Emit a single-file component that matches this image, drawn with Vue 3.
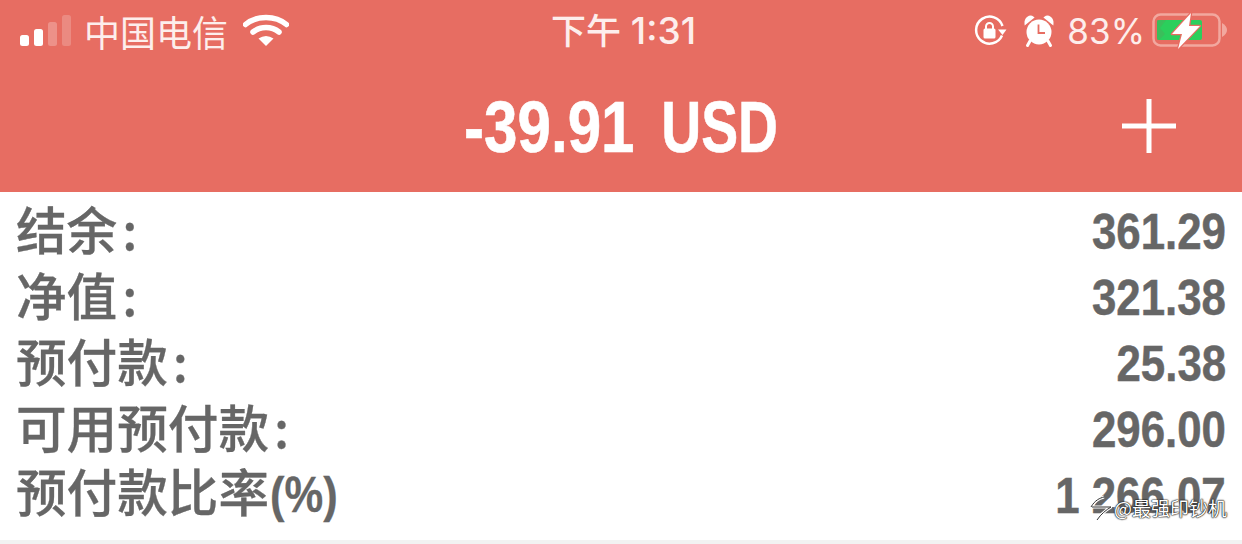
<template>
  <div class="screen">
    <header class="top">
      <div class="status">
        <div class="status-left">
          <svg class="signal" width="53" height="34" viewBox="0 0 53 34">
            <rect x="1" y="21" width="9" height="11" rx="2.5" fill="#fff" />
            <rect x="15" y="15" width="9" height="17" rx="2.5" fill="#fff" />
            <rect x="29" y="8" width="9" height="24" rx="2.5" fill="#fff" opacity="0.25" />
            <rect x="43" y="1" width="9" height="31" rx="2.5" fill="#fff" opacity="0.2" />
          </svg>
          <span class="carrier">中国电信</span>
          <svg class="wifi" width="46" height="34" viewBox="0 0 46 34">
            <path d="M2.500 10.500C13.500 1 32.500 1 43.500 10.500" fill="none" stroke="#fff" stroke-width="5.500" stroke-linecap="round" />
            <path d="M10 18C17.500 12 28.500 12 36 18" fill="none" stroke="#fff" stroke-width="5.500" stroke-linecap="round" />
            <path d="M15.500 24.500Q23 19.500 30.500 24.500L23 32Z" fill="#fff" />
          </svg>
        </div>
        <div class="clock"><span>下午</span> 1:31</div>
        <div class="status-right">
          <svg class="lock" width="34" height="34" viewBox="0 0 34 34">
            <path d="M29 21.500A13.500 13.500 0 1 1 29.500 12" fill="none" stroke="#fff" stroke-width="2.500" />
            <path d="M25 15.500L33.500 15.500L29.500 21Z" fill="#fff" />
            <rect x="10.500" y="14.500" width="12" height="10" rx="1.500" fill="#fff" />
            <path d="M13 15V12.500A3.500 3.500 0 0 1 20 12.500V15" fill="none" stroke="#fff" stroke-width="2" />
          </svg>
          <svg class="alarm" width="32" height="34" viewBox="0 0 32 34">
            <circle cx="16" cy="18" r="12.500" fill="#fff" />
            <path d="M2.500 9.500C2 4 7 1 10 3.500ZM29.500 9.500C30 4 25 1 22 3.500Z" fill="#fff" stroke="#fff" stroke-width="2" />
            <path d="M7 27L4.500 31.500M25 27L27.500 31.500" stroke="#fff" stroke-width="3" stroke-linecap="round" />
            <path d="M15.500 10.500V19H22" fill="none" stroke="#e76d62" stroke-width="1.800" />
          </svg>
          <span class="percent">83%</span>
          <svg class="battery" width="76" height="38" viewBox="0 0 76 38">
            <rect x="1.500" y="2.500" width="66" height="31" rx="7" fill="none" stroke="#f2a89f" stroke-width="2.500" />
            <path d="M70 11Q75 14 75 18T70 25Z" fill="#f2a89f" />
            <rect x="5" y="8" width="45" height="20" rx="2" fill="#2bcf5c" />
            <path d="M5 8H14L8 16L13 22L7 28H5Z" fill="#4fa95a" opacity="0.45" />
            <path d="M39 1L20 22H30L26 37L48 14H37Z" fill="#fff" stroke="#e76d62" stroke-width="2.500" stroke-linejoin="round" paint-order="stroke" />
          </svg>
        </div>
      </div>
      <div class="title-row">
        <div class="title">-39.91 <span>USD</span></div>
        <svg class="plus" width="56" height="56" viewBox="0 0 56 56">
          <path d="M28 1V55M1 28H55" stroke="#fff" stroke-width="5" />
        </svg>
      </div>
    </header>

    <section class="list">
      <div v-for="row in rows" :key="row.label" class="row">
        <span class="label">{{ row.label }}<em v-if="row.unit">{{ row.unit }}</em><i v-else>:</i></span>
        <span class="value">{{ row.value }}</span>
      </div>
      <div class="mark">
        <svg width="22" height="26" viewBox="0 0 22 26">
          <path d="M1 12C5 5 10 3 14 2M2 12H21C16 15 11 19 7 25" fill="none" stroke="#fff" stroke-width="3" />
          <path d="M1 12C5 5 10 3 14 2M2 12H21C16 15 11 19 7 25" fill="none" stroke="#333" stroke-width="1" />
        </svg>
        <span>@最强印钞机</span>
      </div>
    </section>
    <div class="strip"></div>
  </div>
</template>

<script setup>
const rows = [
  { label: '结余', value: '361.29' },
  { label: '净值', value: '321.38' },
  { label: '预付款', value: '25.38' },
  { label: '可用预付款', value: '296.00' },
  { label: '预付款比率', unit: '(%)', value: '1 266.07' },
]
</script>

<style>
html,
body {
  margin: 0;
  background: #fff;
}
</style>

<style scoped>
.screen {
  width: 1242px;
  height: 544px;
  display: flex;
  flex-direction: column;
  overflow: hidden;
  background: #fff;
  font-family: "Noto Sans CJK SC", "Liberation Sans", sans-serif;
}

/* top red block */
.top {
  height: 192px;
  background: #e76d62;
  color: #fff;
  flex: none;
}

.status {
  height: 62px;
  display: grid;
  grid-template-columns: 1fr auto 1fr;
  align-items: center;
  padding: 0 14px 0 19px;
}

.status-left,
.status-right {
  display: flex;
  align-items: center;
}

.status-right {
  justify-content: flex-end;
}

.carrier {
  margin-left: 12px;
  font-size: 36px;
  line-height: 40px;
  color: #fdeeec;
}

.wifi {
  margin-left: 15px;
}

.clock {
  font-family: Inter, "Noto Sans CJK SC", sans-serif;
  font-size: 37px;
  line-height: 40px;
  font-weight: 500;
  color: #fdeeec;
}

.clock span {
  font-size: 35px;
}

.lock {
  margin-right: 16px;
}

.alarm {
  margin-right: 12px;
}

.percent {
  font-family: Inter, "Liberation Sans", sans-serif;
  font-size: 35px;
  line-height: 40px;
  color: #fdeeec;
  margin-right: 7px;
}

.title-row {
  height: 130px;
  display: flex;
  align-items: center;
  justify-content: center;
  position: relative;
}

.title {
  font-family: "Liberation Sans", Arial, sans-serif;
  font-weight: 700;
  font-size: 72px;
  line-height: 80px;
  white-space: nowrap;
  -webkit-text-stroke: 0.6px #fff;
  transform: scaleX(0.835);
}

.title span {
  display: inline-block;
  transform: scaleX(0.92);
  transform-origin: right center;
}

.plus {
  position: absolute;
  right: 65px;
  top: 36px;
}

/* account rows */
.list {
  flex: 1;
  position: relative;
  padding: 7px 16px 0 16px;
}

.row {
  height: 66px;
  display: flex;
  justify-content: space-between;
  align-items: center;
  color: #666;
}

.label {
  font-size: 50.6px;
  line-height: 66px;
  font-weight: 500;
  white-space: nowrap;
  margin-bottom: 8px;
  -webkit-text-stroke: 0.3px #666;
}

.label i {
  font-style: normal;
  margin-left: 5px;
}

.label em {
  font-style: normal;
  font-family: "Liberation Sans", Arial, sans-serif;
  font-size: 50px;
  font-weight: 700;
  display: inline-block;
  margin-left: 1px;
  transform: scaleX(0.87);
  transform-origin: left center;
}

.value {
  font-family: "Liberation Sans", Arial, sans-serif;
  font-weight: 700;
  font-size: 50px;
  line-height: 66px;
  white-space: nowrap;
  -webkit-text-stroke: 0.5px #666;
  transform: scaleX(0.876);
  transform-origin: right center;
}

/* wechat watermark */
.mark {
  position: absolute;
  right: 15px;
  top: 303px;
  display: flex;
  align-items: center;
  gap: 2px;
  font-size: 19px;
  line-height: 26px;
  color: #fff;
  text-shadow: 0 0 1px #111, 0 0 1px #111, 0 0 2px #111;
}

.strip {
  height: 4px;
  background: #f2f2f2;
  flex: none;
}
</style>
